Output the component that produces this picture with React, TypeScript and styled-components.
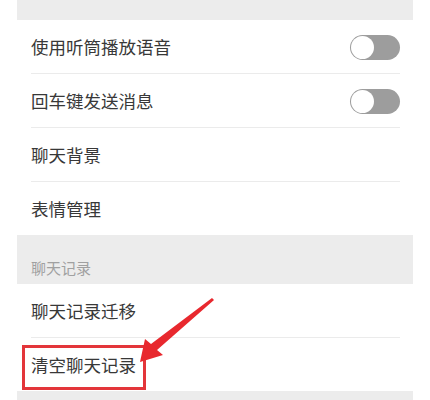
import styled, { createGlobalStyle } from "styled-components";

const GlobalStyle = createGlobalStyle`
  html, body {
    margin: 0;
    padding: 0;
    background: #ffffff;
  }
  body {
    font-family: "Noto Sans CJK SC", "Noto Sans", sans-serif;
  }
`;

const Page = styled.div`
  position: relative;
  width: 430px;
  height: 400px;
  overflow: hidden;
  background: #ffffff;
`;

const Panel = styled.div`
  display: flex;
  flex-flow: column nowrap;
  margin: 0 17px;
  width: 396px;
  background: #ffffff;
`;

const GrayBand = styled.div<{ $height: number }>`
  display: flex;
  align-items: flex-end;
  height: ${props => props.$height}px;
  padding: 0 14px;
  background: #ececec;
  box-sizing: border-box;
`;

const SectionLabel = styled.span`
  font-size: 15px;
  line-height: 15px;
  color: #a0a0a0;
  margin-bottom: 9px;
`;

const Row = styled.div<{ $divider?: boolean }>`
  position: relative;
  display: flex;
  align-items: center;
  justify-content: space-between;
  height: 53px;
  margin: 0 13px 0 14px;
  border-bottom: ${props => (props.$divider ? "1px solid #ebebeb" : "none")};
`;

const Label = styled.span`
  font-size: 17.5px;
  color: #383838;
`;

const Toggle = styled.div`
  position: relative;
  width: 50px;
  height: 25px;
  border-radius: 13px;
  background: #9d9d9d;
  margin-top: 1px;
`;

const Knob = styled.div`
  position: absolute;
  left: 1px;
  top: 1px;
  width: 23px;
  height: 23px;
  border-radius: 50%;
  background: #ffffff;
`;

const Highlight = styled.div`
  position: absolute;
  left: -9px;
  top: 7px;
  width: 124px;
  height: 45px;
  border: 3px solid #e3353a;
  box-sizing: border-box;
`;

const ArrowLayer = styled.svg`
  position: absolute;
  left: 0;
  top: 0;
  pointer-events: none;
`;

function Switch(): JSX.Element {
  return (
    <Toggle>
      <Knob />
    </Toggle>
  );
}

export default function App(): JSX.Element {
  return (
    <Page>
      <GlobalStyle />
      <Panel>
        <GrayBand $height={20} />
        <Row $divider>
          <Label>使用听筒播放语音</Label>
          <Switch />
        </Row>
        <Row $divider>
          <Label>回车键发送消息</Label>
          <Switch />
        </Row>
        <Row $divider>
          <Label>聊天背景</Label>
        </Row>
        <Row>
          <Label>表情管理</Label>
        </Row>
        <GrayBand $height={49}>
          <SectionLabel>聊天记录</SectionLabel>
        </GrayBand>
        <Row $divider>
          <Label>聊天记录迁移</Label>
        </Row>
        <Row>
          <Label>清空聊天记录</Label>
          <Highlight />
        </Row>
        <GrayBand $height={20} />
      </Panel>
      <ArrowLayer width="430" height="400" viewBox="0 0 430 400">
        <polygon
          points="212,298 214,300 157,350 163,355 140,362 145,339 151,344"
          fill="#e8282e"
        />
      </ArrowLayer>
    </Page>
  );
}
